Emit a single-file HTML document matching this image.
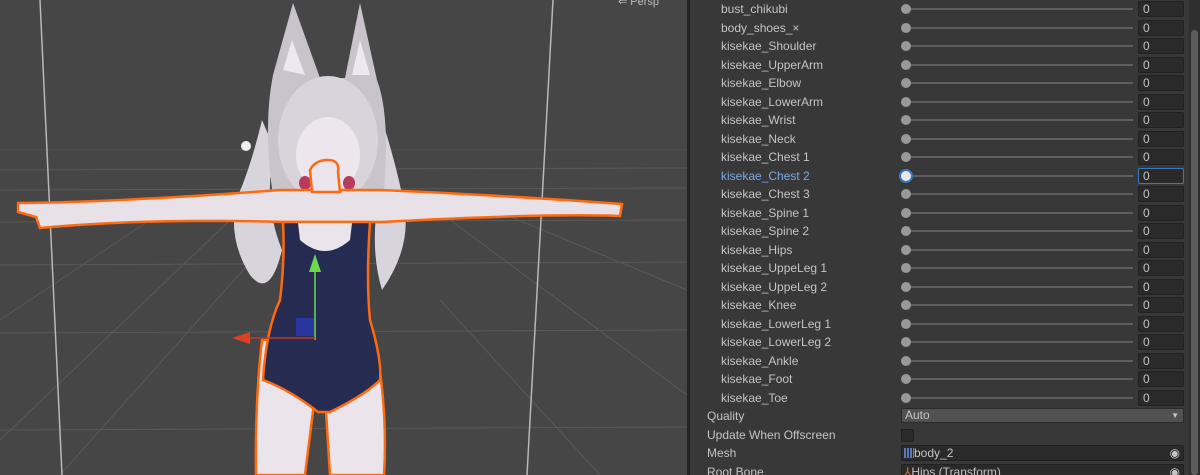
<!DOCTYPE html>
<html style="overflow:hidden"><head><meta charset="utf-8"><style>
*{margin:0;padding:0;box-sizing:border-box}
html,body{width:1200px;height:475px;overflow:hidden}
body{background:#383838;font-family:"Liberation Sans",sans-serif;position:relative}
#scene{position:absolute;left:0;top:0;width:687px;height:475px;background:#464646;overflow:hidden}
#sep{position:absolute;left:687px;top:0;width:3px;height:475px;background:#232323}
.row{position:absolute;left:690px;width:500px;height:18px;font-size:12px;color:#c4c4c4}
.row .l{position:absolute;left:31px;top:2px}
.track{position:absolute;left:216px;top:8px;width:227px;height:2px;background:#5e5e5e}
.thumb{position:absolute;left:211px;top:4px;width:10px;height:10px;border-radius:50%;background:#999}
.num{position:absolute;left:448px;top:1px;width:46px;height:16px;background:#2a2a2a;border:1px solid #212121;border-radius:2px;padding-left:4px;font-size:12px;line-height:15px;color:#c4c4c4}
.sel .l{color:#7ba7e0}
.sel .thumb{background:#e8e8f0;border:2px solid #3a79c0;left:209px;top:2px;width:14px;height:14px}
.sel .num{border-color:#3a79c0}
.p .l{left:17px}
#sb{position:absolute;left:1189px;top:0;width:11px;height:475px;background:#2f2f2f}
#sbt{position:absolute;left:1191px;top:30px;width:7px;height:445px;border-radius:4px;background:#5d5d5d}
</style></head><body>
<div id="scene">
<svg width="687" height="475" viewBox="0 0 687 475">
<g stroke="#5a5a5a" stroke-width="1" fill="none">
<line x1="0" y1="150" x2="687" y2="150" stroke="#505050"/>
<line x1="0" y1="170" x2="687" y2="168"/>
<line x1="0" y1="190" x2="687" y2="188"/>
<line x1="0" y1="222" x2="687" y2="220"/>
<line x1="0" y1="265" x2="687" y2="262"/>
<line x1="0" y1="333" x2="687" y2="330"/>
<line x1="0" y1="430" x2="687" y2="427"/>
<line x1="0" y1="320" x2="180" y2="200"/>
<line x1="0" y1="440" x2="230" y2="220"/>
<line x1="60" y1="475" x2="270" y2="240"/>
<line x1="687" y1="395" x2="450" y2="220"/>
<line x1="687" y1="290" x2="470" y2="200"/>
<line x1="600" y1="475" x2="440" y2="300"/>
</g>
<g stroke="#b8b8b8" stroke-width="1.5">
<line x1="40" y1="0" x2="62" y2="475"/>
<line x1="553" y1="0" x2="527" y2="475"/>
</g>
<path d="M262 120 Q250 170 236 200 Q228 240 250 275 Q270 300 282 250 Q262 200 275 150 Z" fill="#d8d4dc"/>
<path d="M382 120 Q398 170 405 210 Q410 250 382 290 Q370 250 378 200 Z" fill="#d8d4dc"/>
<path d="M273 75 L293 3 L320 78 L345 78 L360 3 L377 80 Q392 120 382 210 L275 210 Q262 130 273 75Z" fill="#c9c4cc"/>
<path d="M283 70 L292 40 L305 75Z M352 75 L360 40 L370 75Z" fill="#ece8f0"/>
<ellipse cx="328" cy="140" rx="50" ry="64" fill="#d9d4dc"/>
<ellipse cx="328" cy="155" rx="32" ry="38" fill="#ede6ec"/>
<ellipse cx="305" cy="183" rx="6" ry="7" fill="#b83a5e"/>
<ellipse cx="349" cy="183" rx="6" ry="7" fill="#b83a5e"/>
<ellipse cx="246" cy="146" rx="5" ry="5" fill="#eee"/>
<path d="M18 203 Q120 202 280 190 L380 190 Q500 195 622 204 L620 216 Q550 213 380 222 L285 222 Q150 218 40 228 L36 217 L18 212 Z" fill="#e8e1e8" stroke="#ff6a10" stroke-width="2.5"/>
<path d="M310 170 Q315 160 328 160 Q340 160 338 172 L340 192 L312 192 Z" fill="#ebe4ea" stroke="#ff6a10" stroke-width="2.5"/>
<path d="M262 340 Q255 400 256 475 L305 475 L315 395 L325 395 L330 475 L384 475 Q388 410 375 340 Z" fill="#ebe4ea" stroke="#ff6a10" stroke-width="2.5"/>
<path d="M283 222 L370 222 Q366 280 370 320 Q382 360 380 380 Q365 395 330 412 L318 412 Q290 390 263 380 Q266 330 280 300 Q285 260 283 222Z" fill="#262b52" stroke="#ff6a10" stroke-width="2.5"/>
<path d="M300 240 Q325 262 350 240 L352 223 L298 223Z" fill="#ebe4ea"/>
<line x1="315" y1="340" x2="315" y2="268" stroke="#6cd84a" stroke-width="1.5"/>
<path d="M309 272 L315 254 L321 272Z" fill="#6cd84a"/>
<line x1="315" y1="338" x2="247" y2="338" stroke="#c0382a" stroke-width="1.5"/>
<path d="M250 332 L232 338 L250 344Z" fill="#e04020"/>
<rect x="296" y="318" width="18" height="18" fill="#2a3ab0" opacity="0.8"/>
</svg>
<div style="position:absolute;left:618px;top:-5px;font-size:11px;color:#bbb">⇐ Persp</div>
</div>
<div id="sep"></div>
<div id="sb"></div><div id="sbt"></div>
<div class="row" style="top:0"><span class="l">bust_chikubi</span><div class="track"></div><div class="thumb"></div><div class="num">0</div></div>
<div class="row" style="top:18.5px"><span class="l">body_shoes_×</span><div class="track"></div><div class="thumb"></div><div class="num">0</div></div>
<div class="row" style="top:37px"><span class="l">kisekae_Shoulder</span><div class="track"></div><div class="thumb"></div><div class="num">0</div></div>
<div class="row" style="top:55.5px"><span class="l">kisekae_UpperArm</span><div class="track"></div><div class="thumb"></div><div class="num">0</div></div>
<div class="row" style="top:74px"><span class="l">kisekae_Elbow</span><div class="track"></div><div class="thumb"></div><div class="num">0</div></div>
<div class="row" style="top:92.5px"><span class="l">kisekae_LowerArm</span><div class="track"></div><div class="thumb"></div><div class="num">0</div></div>
<div class="row" style="top:111px"><span class="l">kisekae_Wrist</span><div class="track"></div><div class="thumb"></div><div class="num">0</div></div>
<div class="row" style="top:129.5px"><span class="l">kisekae_Neck</span><div class="track"></div><div class="thumb"></div><div class="num">0</div></div>
<div class="row" style="top:148px"><span class="l">kisekae_Chest 1</span><div class="track"></div><div class="thumb"></div><div class="num">0</div></div>
<div class="row sel" style="top:166.5px"><span class="l">kisekae_Chest 2</span><div class="track"></div><div class="thumb"></div><div class="num">0</div></div>
<div class="row" style="top:185px"><span class="l">kisekae_Chest 3</span><div class="track"></div><div class="thumb"></div><div class="num">0</div></div>
<div class="row" style="top:203.5px"><span class="l">kisekae_Spine 1</span><div class="track"></div><div class="thumb"></div><div class="num">0</div></div>
<div class="row" style="top:222px"><span class="l">kisekae_Spine 2</span><div class="track"></div><div class="thumb"></div><div class="num">0</div></div>
<div class="row" style="top:240.5px"><span class="l">kisekae_Hips</span><div class="track"></div><div class="thumb"></div><div class="num">0</div></div>
<div class="row" style="top:259px"><span class="l">kisekae_UppeLeg 1</span><div class="track"></div><div class="thumb"></div><div class="num">0</div></div>
<div class="row" style="top:277.5px"><span class="l">kisekae_UppeLeg 2</span><div class="track"></div><div class="thumb"></div><div class="num">0</div></div>
<div class="row" style="top:296px"><span class="l">kisekae_Knee</span><div class="track"></div><div class="thumb"></div><div class="num">0</div></div>
<div class="row" style="top:314.5px"><span class="l">kisekae_LowerLeg 1</span><div class="track"></div><div class="thumb"></div><div class="num">0</div></div>
<div class="row" style="top:333px"><span class="l">kisekae_LowerLeg 2</span><div class="track"></div><div class="thumb"></div><div class="num">0</div></div>
<div class="row" style="top:351.5px"><span class="l">kisekae_Ankle</span><div class="track"></div><div class="thumb"></div><div class="num">0</div></div>
<div class="row" style="top:370px"><span class="l">kisekae_Foot</span><div class="track"></div><div class="thumb"></div><div class="num">0</div></div>
<div class="row" style="top:388.5px"><span class="l">kisekae_Toe</span><div class="track"></div><div class="thumb"></div><div class="num">0</div></div>
<div class="row p" style="top:407px"><span class="l">Quality</span>
 <div style="position:absolute;left:211px;top:1px;width:283px;height:15px;background:#515151;border-radius:2px;border:1px solid #2a2a2a;font-size:12px;padding-left:3px;line-height:13px">Auto<span style="position:absolute;right:4px;top:0;font-size:8px">▼</span></div></div>
<div class="row p" style="top:425.5px"><span class="l">Update When Offscreen</span>
 <div style="position:absolute;left:211px;top:3px;width:13px;height:13px;background:#2a2a2a;border:1px solid #202020;border-radius:2px"></div></div>
<div class="row p" style="top:444px"><span class="l">Mesh</span>
 <div class="num" style="left:211px;width:283px;padding-left:2px"><span style="display:inline-block;width:10px;height:10px;background:repeating-linear-gradient(90deg,#5a7ab8 0 2px,#2a2a2a 2px 3px);vertical-align:-1px"></span>body_2<span style="position:absolute;right:3px;top:0">◉</span></div></div>
<div class="row p" style="top:462.5px"><span class="l">Root Bone</span>
 <div class="num" style="left:211px;width:283px;padding-left:2px"><span style="color:#d86a3a">⅄</span>Hips (Transform)<span style="position:absolute;right:3px;top:0">◉</span></div></div>
</body></html>
